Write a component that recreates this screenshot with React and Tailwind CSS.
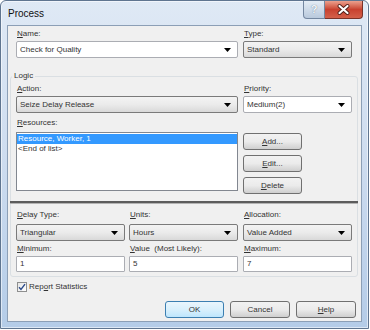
import React from "react";

const U = ({ children }) => <span className="underline">{children}</span>;

const Arrow = () => (
  <svg width="7" height="4" viewBox="0 0 7 4" className="shrink-0">
    <path d="M0 0h7L3.5 4z" fill="#000" />
  </svg>
);

const Label = ({ children }) => (
  <div className="h-[10px] leading-[10px] pl-[1px] whitespace-nowrap">{children}</div>
);

const Combo = ({ value, editable, width }) => (
  <div
    className={`h-[17px] flex items-center justify-between pl-[3px] pr-[6px] rounded-[2px] border ${width} ${
      editable
        ? "bg-white border-[#abadb3]"
        : "border-[#7a7a7a] bg-gradient-to-b from-[#f3f3f3] via-[#ebebeb] to-[#d9d9d9]"
    }`}
  >
    <span className="leading-[10px]">{value}</span>
    <Arrow />
  </div>
);

const Field = ({ value }) => (
  <div className="h-[16px] w-[109px] flex items-center pl-[3px] bg-white border border-[#abadb3] rounded-[1px]">
    {value}
  </div>
);

const Button = ({ children, width = "w-[59px]", isDefault }) => (
  <button
    className={`${width} h-[17px] flex items-center justify-center rounded-[3px] border leading-[10px] text-[#333] ${
      isDefault
        ? "border-[#3c7fb1] bg-gradient-to-b from-[#eaf6fd] via-[#d9f0fc] to-[#bee6fd]"
        : "border-[#707070] bg-gradient-to-b from-[#f2f2f2] via-[#ebebeb] to-[#cfcfcf]"
    }`}
  >
    {children}
  </button>
);

const App = () => {
  return (
    <div className="w-[370px] h-[330px] bg-white font-['Liberation_Sans',Arial,sans-serif] text-[8px] text-[#333]">
      <div className="w-[369px] h-[329px] flex flex-col rounded-t-[6px] border border-[#5f7590] bg-gradient-to-b from-[#dfe9f5] via-[#cddcef] to-[#b4cce8] shadow-[inset_0_0_0_1px_rgba(255,255,255,0.55)]">
        {/* title bar */}
        <div className="h-[24px] flex items-start">
          <div className="pt-[7px] pl-[7px] text-[10px] leading-[12px] text-[#111]">Process</div>
          <div className="ml-auto mr-[5px] flex">
            <div className="w-[22px] h-[18px] flex items-center justify-center rounded-bl-[4px] border border-t-0 border-[#7487a0] bg-gradient-to-b from-[#e4ecf5] to-[#b9c9dc] text-[11px] font-bold text-[#f4f7fb] [text-shadow:0_0_1px_#55667d]">
              ?
            </div>
            <div className="w-[38px] h-[18px] flex items-center justify-center rounded-br-[4px] border border-t-0 border-l-0 border-[#7a3228] bg-gradient-to-b from-[#eba08e] via-[#c8412f] to-[#d3604a]">
              <svg width="13" height="11" viewBox="0 0 13 11">
                <path d="M2.5 2l8 7M10.5 2l-8 7" stroke="#4b1a14" strokeWidth="3.8" strokeLinecap="round" />
                <path d="M2.5 2l8 7M10.5 2l-8 7" stroke="#fff" strokeWidth="2.2" strokeLinecap="round" />
              </svg>
            </div>
          </div>
        </div>

        {/* client area */}
        <div className="flex-1 mx-[6px] mb-[6px] bg-[#f0f0f0] border border-[#8c9fb6] pl-[8px] pr-[9px] pt-[3px] flex flex-col">
          <div className="grid grid-cols-[227px_109px]">
            <Label>
              <U>N</U>ame:
            </Label>
            <Label>
              <U>T</U>ype:
            </Label>
            <div className="mt-[2px]">
              <Combo value="Check for Quality" editable width="w-[222px]" />
            </div>
            <div className="mt-[2px]">
              <Combo value="Standard" width="w-[109px]" />
            </div>
          </div>

          {/* Logic group */}
          <div className="mt-[18px] -mx-[6px] px-[5px] pb-[4px] border border-[#dadfe3] rounded-[3px]">
            <div className="-mt-[6px] -ml-[4px] w-fit px-[2px] bg-[#f0f0f0] leading-[10px]">Logic</div>

            <div className="mt-[3px] grid grid-cols-[227px_109px]">
              <Label>
                <U>A</U>ction:
              </Label>
              <Label>
                <U>P</U>riority:
              </Label>
              <div className="mt-[2px]">
                <Combo value="Seize Delay Release" width="w-[222px]" />
              </div>
              <div className="mt-[2px]">
                <Combo value="Medium(2)" editable width="w-[109px]" />
              </div>
            </div>

            <div className="mt-[5px]">
              <Label>
                <U>R</U>esources:
              </Label>
            </div>

            <div className="mt-[4px] grid grid-cols-[227px_59px]">
              <div className="w-[222px] h-[59px] bg-white border border-[#828790] pt-[1px]">
                <div className="h-[10px] leading-[10px] pl-[1px] bg-[#3399ff] text-white">Resource, Worker, 1</div>
                <div className="h-[10px] leading-[10px] pl-[1px]">&lt;End of list&gt;</div>
              </div>
              <div className="mt-[1px] flex flex-col gap-[5px]">
                <Button>
                  <U>A</U>dd...
                </Button>
                <Button>
                  <U>E</U>dit...
                </Button>
                <Button>
                  <U>D</U>elete
                </Button>
              </div>
            </div>

            <div className="mt-[7px] -mx-[6px]">
              <div className="h-[2px] bg-[#5c5c5c]" />
              <div className="h-[1px] bg-[#b3b3b3]" />
            </div>

            <div className="mt-[6px] grid grid-cols-[113px_114px_109px]">
              <Label>
                <U>D</U>elay Type:
              </Label>
              <Label>
                <U>U</U>nits:
              </Label>
              <Label>
                <U>A</U>llocation:
              </Label>
              <div className="mt-[4px]">
                <Combo value="Triangular" width="w-[109px]" />
              </div>
              <div className="mt-[4px]">
                <Combo value="Hours" width="w-[109px]" />
              </div>
              <div className="mt-[4px]">
                <Combo value="Value Added" width="w-[109px]" />
              </div>
              <div className="mt-[3px]">
                <Label>
                  <U>M</U>inimum:
                </Label>
              </div>
              <div className="mt-[3px]">
                <Label>
                  <U>V</U>alue&nbsp; (Most Likely):
                </Label>
              </div>
              <div className="mt-[3px]">
                <Label>
                  <U>M</U>aximum:
                </Label>
              </div>
              <div className="mt-[2px]">
                <Field value="1" />
              </div>
              <div className="mt-[2px]">
                <Field value="5" />
              </div>
              <div className="mt-[2px]">
                <Field value="7" />
              </div>
            </div>
          </div>

          <div className="mt-[5px] ml-[1px] flex items-center gap-[2px]">
            <div className="w-[10px] h-[10px] bg-gradient-to-br from-[#e6e6e6] to-white border border-[#8e8f8f] flex items-center justify-center">
              <svg width="8" height="8" viewBox="0 0 8 8">
                <path d="M1 4.2l2 2.3L7 1.2" fill="none" stroke="#2b4a8a" strokeWidth="1.4" />
              </svg>
            </div>
            <span className="leading-[10px]">
              Rep<U>o</U>rt Statistics
            </span>
          </div>

          <div className="mt-[9px] -mr-[4px] flex justify-end gap-[6px]">
            <Button isDefault>OK</Button>
            <Button width="w-[60px]">Cancel</Button>
            <Button width="w-[60px]">
              <U>H</U>elp
            </Button>
          </div>
        </div>
      </div>
    </div>
  );
};

export default App;
